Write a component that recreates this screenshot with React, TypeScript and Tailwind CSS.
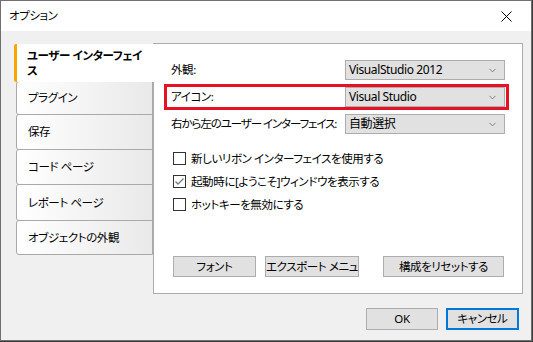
import { ChevronDown } from 'lucide-react';

const tabs = [
  { label: 'プラグイン', h: 'h-[34px]' },
  { label: '保存', h: 'h-[36px]' },
  { label: 'コード ページ', h: 'h-[36px]' },
  { label: 'レポート ページ', h: 'h-[37px]' },
  { label: 'オブジェクトの外観', h: 'h-[35px]' },
];

const checks = [
  { label: '新しいリボン インターフェイスを使用する', checked: false },
  { label: '起動時に[ようこそ]ウィンドウを表示する', checked: true },
  { label: 'ホットキーを無効にする', checked: false },
];

function Select({ value }: { value: string }) {
  return (
    <div className="w-[160px] h-[20px] bg-[#e1e1e1] border border-[#adadad] flex items-center justify-between pl-[3px] pr-[6px] text-[12px]">
      <span>{value}</span>
      <ChevronDown size={11} strokeWidth={1.5} className="text-[#555]" />
    </div>
  );
}

function Btn({ label, w }: { label: string; w: string }) {
  return (
    <button className={`${w} h-[21px] bg-[#e1e1e1] border border-[#adadad] flex items-center justify-center whitespace-nowrap`}>
      {label}
    </button>
  );
}

export default function App() {
  return (
    <div className="w-[533px] h-[342px] bg-[#3c3c3c] overflow-hidden">
      <div className="w-[532px] h-[341px] border border-[#707070] bg-[#f0f0f0] flex flex-col text-[11.5px] text-black whitespace-nowrap tracking-[-0.4px] font-['Segoe_UI','Noto_Sans','Noto_Sans_CJK_JP',sans-serif] [font-feature-settings:'palt']">
        {/* Title bar */}
        <div className="h-[30px] bg-white flex items-center justify-between pl-[8px] pr-[19px]">
          <span>オプション</span>
          <svg width="11" height="11" viewBox="0 0 11 11" className="mt-[1px]">
            <path d="M0.5 0.5 L10.5 10.5 M10.5 0.5 L0.5 10.5" stroke="#000" strokeWidth="1" />
          </svg>
        </div>

        {/* Body */}
        <div className="flex-1 flex flex-col pt-[12px]">
          <div className="flex ml-[13px]">
            {/* Tabs */}
            <div className="w-[139px] flex flex-col pt-[1px]">
              <div className="relative z-10 -mr-px h-[38px] bg-white border-l-[3px] border-[#f9a602] rounded-l-[2px] pl-[10px] pt-[4px] font-bold leading-[15px]">
                <div>ユーザー インターフェイ</div>
                <div>ス</div>
              </div>
              {tabs.map((t) => (
                <div
                  key={t.label}
                  className={`${t.h} -mt-px first:mt-0 ml-[2px] border border-[#a9a9a9] rounded-l-[3px] bg-gradient-to-r from-white to-[#e9e9e9] flex items-center pl-[11px]`}
                >
                  {t.label}
                </div>
              ))}
            </div>

            {/* Panel */}
            <div className="relative w-[370px] h-[251px] bg-white border border-[#adadad] pt-[16px] pl-[17px]">
              <div className="flex flex-col gap-[7px]">
                <div className="flex items-center">
                  <span className="w-[174px]">外観:</span>
                  <Select value="VisualStudio 2012" />
                </div>
                <div className="flex items-center">
                  <span className="w-[174px]">アイコン:</span>
                  <Select value="Visual Studio" />
                </div>
                <div className="flex items-center">
                  <span className="w-[174px] tracking-[-1.1px]">右から左のユーザー インターフェイス:</span>
                  <Select value="自動選択" />
                </div>
              </div>
              <div className="absolute left-[10px] top-[40px] w-[345px] h-[26px] border-[3px] border-[#e81123]" />

              <div className="flex flex-col gap-[10px] mt-[18px] pl-[2px]">
                {checks.map((c) => (
                  <div key={c.label} className="flex items-center gap-[5px] h-[13px]">
                    <div className="w-[13px] h-[13px] border border-[#333] bg-white flex items-center justify-center">
                      {c.checked && (
                        <svg width="11" height="11" viewBox="0 0 11 11">
                          <path d="M1.5 5.5 L4 8 L9.5 2.5" fill="none" stroke="#7a7a7a" strokeWidth="1.3" />
                        </svg>
                      )}
                    </div>
                    <span>{c.label}</span>
                  </div>
                ))}
              </div>

              <div className="flex mt-[45px] pl-[2px]">
                <Btn label="フォント" w="w-[83px]" />
                <div className="w-[9px]" />
                <Btn label="エクスポート メニュ" w="w-[94px]" />
                <div className="w-[24px]" />
                <Btn label="構成をリセットする" w="w-[121px]" />
              </div>
            </div>
          </div>

          {/* Bottom buttons */}
          <div className="flex justify-end gap-[8px] mt-[14px] pr-[12px]">
            <button className="w-[72px] h-[22px] bg-[#e1e1e1] border border-[#adadad]">OK</button>
            <button className="w-[73px] h-[22px] bg-[#e1e1e1] border-2 border-[#0078d7]">キャンセル</button>
          </div>
        </div>
      </div>
    </div>
  );
}
